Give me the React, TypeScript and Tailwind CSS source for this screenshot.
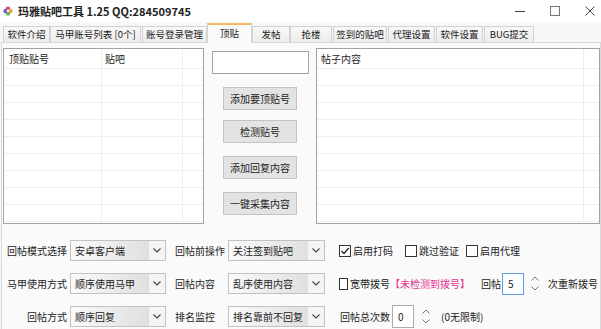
import React from "react";

const tabs = [
  { t: "软件介绍", w: "w-[47px]", ml: "ml-[3px]" },
  { t: "马甲账号列表 [0个]", w: "w-[91px]", ml: "ml-0" },
  { t: "账号登录管理", w: "w-[65px]", ml: "ml-[1px]" },
  { t: "顶贴", w: "w-[45px]", ml: "ml-0", sel: true },
  { t: "发帖", w: "w-[38px]", ml: "ml-0" },
  { t: "抢楼", w: "w-[42px]", ml: "ml-0" },
  { t: "签到的贴吧", w: "w-[54px]", ml: "ml-[1px]" },
  { t: "代理设置", w: "w-[47px]", ml: "ml-[1px]" },
  { t: "软件设置", w: "w-[47px]", ml: "ml-[1px]" },
  { t: "BUG提交", w: "w-[50px]", ml: "ml-[1px]" },
];

function Chevron() {
  return (
    <svg width="8" height="5" viewBox="0 0 8 5">
      <path d="M0.5 0.5 L4 4 L7.5 0.5" fill="none" stroke="#444" strokeWidth="1.1" />
    </svg>
  );
}

function Select({ text, w }: { text: string; w: string }) {
  return (
    <div className={`${w} h-[21px] border border-[#c2c2c2] flex items-center bg-[linear-gradient(to_right,#fafafa,#dadada)]`}>
      <span className="pl-[4px] flex-1 whitespace-nowrap">{text}</span>
      <div className="w-[16px] h-full flex items-center justify-center bg-[#f4f4f4]">
        <Chevron />
      </div>
    </div>
  );
}

function Check({ label, checked, w }: { label: string; checked?: boolean; w: string }) {
  return (
    <div className={`${w} flex items-center`}>
      <div className="w-[12px] h-[12px] border border-[#333] bg-white flex items-center justify-center">
        {checked && (
          <svg width="10" height="10" viewBox="0 0 10 10">
            <path d="M1.5 5 L4 7.5 L8.8 2" fill="none" stroke="#222" strokeWidth="1.2" />
          </svg>
        )}
      </div>
      <span className="ml-[2px] whitespace-nowrap">{label}</span>
    </div>
  );
}

function Spinner() {
  return (
    <div className="w-[13px] h-[22px] flex flex-col items-center justify-center gap-[5px]">
      <svg width="8" height="5" viewBox="0 0 8 5">
        <path d="M0.5 4.5 L4 1 L7.5 4.5" fill="none" stroke="#777" strokeWidth="1" />
      </svg>
      <svg width="8" height="5" viewBox="0 0 8 5">
        <path d="M0.5 0.5 L4 4 L7.5 0.5" fill="none" stroke="#777" strokeWidth="1" />
      </svg>
    </div>
  );
}

function Btn({ text, mt }: { text: string; mt: string }) {
  return (
    <div className={`${mt} ml-[19px] w-[74px] h-[23px] border border-[#c4c4c4] bg-[#e3e3e3] flex items-center justify-center whitespace-nowrap`}>
      {text}
    </div>
  );
}

const rows = Array.from({ length: 9 });

export default function App() {
  return (
    <div className="w-[601px] h-[329px] overflow-hidden bg-[#f7f7f7] text-[10px] text-[#222] font-['Noto_Sans_CJK_SC',sans-serif] leading-none">
      {/* title bar */}
      <div className="h-[22px] bg-white flex items-center">
        <svg className="ml-[3px]" width="10" height="10" viewBox="0 0 10 10">
          <circle cx="5" cy="2.6" r="2.2" fill="#e0407a" />
          <circle cx="7.4" cy="5" r="2.2" fill="#f2a53a" />
          <circle cx="5" cy="7.4" r="2.2" fill="#58b947" />
          <circle cx="2.6" cy="5" r="2.2" fill="#7a55c9" />
          <circle cx="5" cy="5" r="1.4" fill="#fff6c8" />
        </svg>
        <span className="ml-[5px] text-[11px] font-bold text-[#222] whitespace-nowrap">玛雅贴吧工具 1.25 QQ:284509745</span>
        <div className="ml-auto mr-[6px] flex items-center gap-[25px]">
          <svg width="10" height="10" viewBox="0 0 10 10">
            <path d="M0 5.5 H10" stroke="#444" strokeWidth="1" />
          </svg>
          <svg width="10" height="10" viewBox="0 0 10 10">
            <rect x="0.5" y="0.5" width="9" height="9" fill="none" stroke="#777" strokeWidth="1" />
          </svg>
          <svg width="10" height="10" viewBox="0 0 10 10">
            <path d="M0.5 0.5 L9.5 9.5 M9.5 0.5 L0.5 9.5" stroke="#444" strokeWidth="1" />
          </svg>
        </div>
      </div>

      {/* tabs */}
      <div className="h-[20px] flex items-end relative z-10 text-[9.5px]">
        {tabs.map((tb) =>
          tb.sel ? (
            <div
              key={tb.t}
              className={`${tb.w} ${tb.ml} h-[20px] -mb-[1px] bg-[#fafafa] border border-b-0 border-[#d5d5d5] border-t-2 border-t-[#f3b866] flex items-center justify-center whitespace-nowrap`}
            >
              {tb.t}
            </div>
          ) : (
            <div
              key={tb.t}
              className={`${tb.w} ${tb.ml} h-[16px] bg-[linear-gradient(#f8f8f8,#ececec)] border border-b-0 border-[#d2d2d2] flex items-center justify-center whitespace-nowrap`}
            >
              {tb.t}
            </div>
          )
        )}
      </div>

      {/* tab page */}
      <div className="ml-[1px] h-[290px] bg-[#fafafa] border border-[#d9d9d9] pt-[5px] pl-[1px]">
        <div className="flex h-[176px]">
          {/* left list */}
          <div className="w-[201px] h-[176px] border border-[#a3a3a3] bg-white overflow-hidden">
            <div className="h-[20px] flex border-b border-[#eeeeee]">
              <div className="w-[98px] border-r border-[#eeeeee] pl-[5px] flex items-center">顶贴贴号</div>
              <div className="w-[81px] border-r border-[#eeeeee] pl-[3px] flex items-center">贴吧</div>
              <div className="flex-1" />
            </div>
            {rows.map((_, i) => (
              <div key={i} className="h-[17px] flex border-b border-[#eeeeee]">
                <div className="w-[98px] border-r border-[#eeeeee]" />
                <div className="w-[81px] border-r border-[#eeeeee]" />
                <div className="flex-1" />
              </div>
            ))}
          </div>

          {/* middle */}
          <div className="w-[112px] flex flex-col">
            <div className="mt-[3px] ml-[8px] w-[97px] h-[23px] border border-[#a3a3a3] bg-white" />
            <Btn text="添加要顶贴号" mt="mt-[13px]" />
            <Btn text="检测贴号" mt="mt-[10px]" />
            <Btn text="添加回复内容" mt="mt-[13px]" />
            <Btn text="一键采集内容" mt="mt-[13px]" />
          </div>

          {/* right list */}
          <div className="flex-1 h-[176px] border border-[#a3a3a3] bg-white overflow-hidden">
            <div className="h-[20px] flex border-b border-[#eeeeee]">
              <div className="w-[267px] border-r border-[#eeeeee] pl-[4px] flex items-center">帖子内容</div>
              <div className="flex-1" />
            </div>
            {rows.map((_, i) => (
              <div key={i} className="h-[17px] flex border-b border-[#eeeeee]">
                <div className="w-[267px] border-r border-[#eeeeee]" />
                <div className="flex-1" />
              </div>
            ))}
          </div>
        </div>

        {/* bottom controls */}
        <div className="mt-[10px] -ml-[1px]">
          <div className="h-[33px] flex items-center">
            <div className="w-[65px] text-right whitespace-nowrap">回帖模式选择</div>
            <div className="ml-[3px]"><Select text="安卓客户端" w="w-[96px]" /></div>
            <div className="ml-[9px] w-[53px] whitespace-nowrap">回帖前操作</div>
            <Select text="关注签到贴吧" w="w-[97px]" />
            <div className="ml-[14px] flex items-center">
              <Check label="启用打码" checked w="w-[66px]" />
              <Check label="跳过验证" w="w-[61px]" />
              <Check label="启用代理" w="w-[60px]" />
            </div>
          </div>
          <div className="h-[33px] flex items-center">
            <div className="w-[65px] text-right whitespace-nowrap">马甲使用方式</div>
            <div className="ml-[3px]"><Select text="顺序使用马甲" w="w-[96px]" /></div>
            <div className="ml-[9px] w-[53px] whitespace-nowrap">回帖内容</div>
            <Select text="乱序使用内容" w="w-[97px]" />
            <div className="ml-[14px] flex items-center">
              <Check label="宽带拨号" w="w-[51px]" />
              <span className="text-[#e2348d] whitespace-nowrap w-[91px]">【未检测到拨号】</span>
              <span className="whitespace-nowrap w-[21px]">回帖</span>
              <div className="w-[22px] h-[22px] border border-[#5b9fe3] bg-white flex items-center pl-[5px]">5</div>
              <div className="ml-[4px]"><Spinner /></div>
              <span className="ml-[7px] whitespace-nowrap">次重新拨号</span>
            </div>
          </div>
          <div className="h-[33px] flex items-center">
            <div className="w-[65px] text-right whitespace-nowrap">回帖方式</div>
            <div className="ml-[3px]"><Select text="顺序回复" w="w-[96px]" /></div>
            <div className="ml-[9px] w-[53px] whitespace-nowrap">排名监控</div>
            <Select text="排名靠前不回复" w="w-[97px]" />
            <div className="ml-[15px] flex items-center">
              <span className="whitespace-nowrap w-[52px]">回帖总次数</span>
              <div className="w-[22px] h-[23px] border border-[#ababab] bg-white flex items-center pl-[5px]">0</div>
              <div className="ml-[5px]"><Spinner /></div>
              <span className="ml-[9px] whitespace-nowrap">(0无限制)</span>
            </div>
          </div>
        </div>
      </div>
    </div>
  );
}
